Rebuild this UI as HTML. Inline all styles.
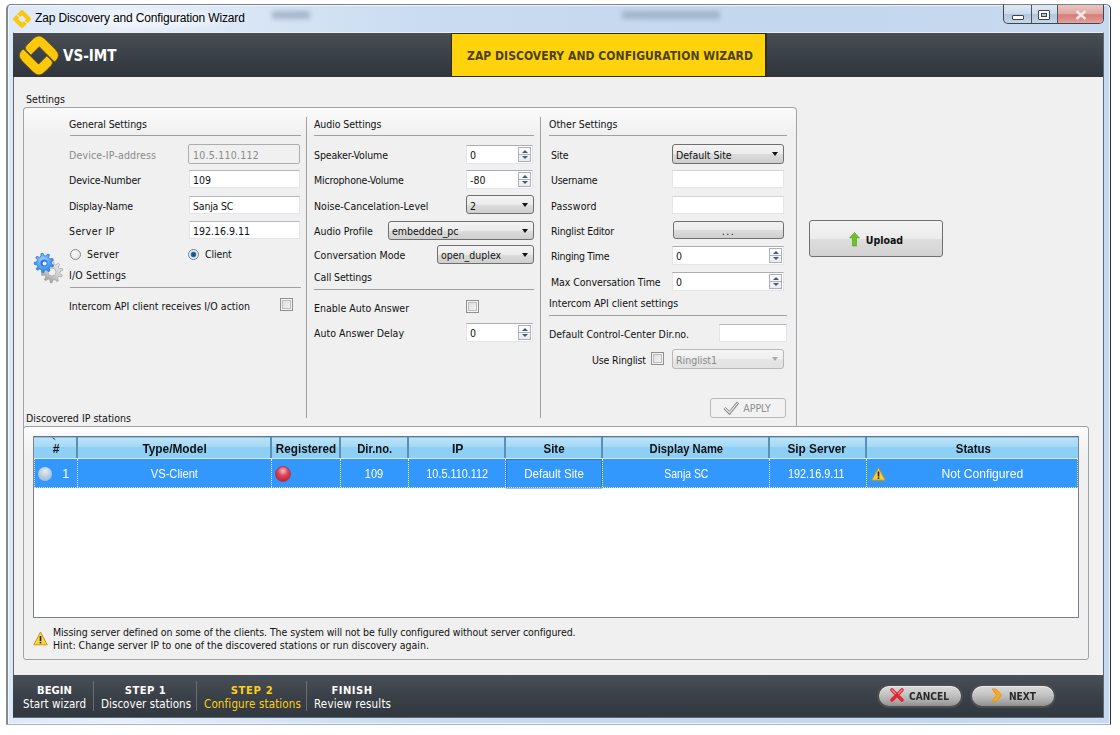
<!DOCTYPE html>
<html>
<head>
<meta charset="utf-8">
<title>Zap Discovery and Configuration Wizard</title>
<style>
html,body{margin:0;padding:0;background:#fff;}
body{width:1120px;height:735px;position:relative;overflow:hidden;font-family:"DejaVu Sans Condensed","DejaVu Sans","Liberation Sans",sans-serif;font-stretch:condensed;font-size:10.5px;color:#000;}
*{box-sizing:border-box;}
.a{position:absolute;}
.t{position:absolute;white-space:nowrap;line-height:14px;height:14px;font-size:10.5px;color:#111;}

.hl{position:absolute;height:1px;background:#a0a0a0;}
.vl{position:absolute;width:1px;background:#a0a0a0;}
.in{position:absolute;background:#fff;border:1px solid #e3e5ea;border-top-color:#b6b8be;height:18px;line-height:19px;padding-left:3px;font-size:10.5px;color:#111;white-space:nowrap;}
.cb{position:absolute;width:13px;height:13px;border:1px solid #8e8f8f;background:linear-gradient(135deg,#d9dadb,#f6f6f6);box-shadow:inset 0 0 0 1px #f4f4f4, inset 0 0 0 2px #bcbcbc;}
.combo{position:absolute;height:19px;border:1px solid #6f6f6f;border-radius:3px;background:linear-gradient(#f4f4f4 0%,#ebebeb 50%,#dcdcdc 51%,#cfcfcf 100%);line-height:19px;padding-left:3px;font-size:10.5px;color:#111;white-space:nowrap;}
.combo i{position:absolute;right:5px;top:7px;width:0;height:0;border-left:3.5px solid transparent;border-right:3.5px solid transparent;border-top:4px solid #111;}
.spin{position:absolute;height:19px;background:#fff;border:1px solid #e3e5ea;border-top-color:#abadb3;line-height:19px;padding-left:3px;font-size:10.5px;color:#111;}
.spin b{position:absolute;right:1px;top:1px;width:13px;height:15px;border:1px solid #adb0b8;background:linear-gradient(#fdfdfd,#e9ebf2);}
.spin b:before{content:"";position:absolute;left:2.5px;top:2px;border-left:3px solid transparent;border-right:3px solid transparent;border-bottom:3px solid #4d5870;}
.spin b:after{content:"";position:absolute;left:2.5px;bottom:2px;border-left:3px solid transparent;border-right:3px solid transparent;border-top:3px solid #4d5870;}
.spin b u{position:absolute;left:0;right:0;top:6px;height:1px;background:#adb0b8;}
.btn{position:absolute;border:1px solid #707070;border-radius:3px;background:linear-gradient(#f2f2f2 0%,#ebebeb 50%,#dddddd 51%,#cfcfcf 100%);text-align:center;font-size:10.5px;color:#111;}
.th{position:absolute;top:0;height:22px;line-height:25px;padding-left:2px;text-align:center;font-weight:bold;font-size:12px;color:#111;border-right:2px solid #5b8fb5;font-family:'Liberation Sans',sans-serif;font-stretch:normal;white-space:nowrap;}
.td{position:absolute;top:0;height:30px;line-height:30px;text-align:center;font-size:12px;color:#fff;border-right:1px dotted #ecead2;font-family:'Liberation Sans',sans-serif;font-stretch:normal;white-space:nowrap;}
.f{display:inline-block;}
.lf .f{transform-origin:0 50%;}
.st{position:absolute;color:#fff;font-size:11.5px;line-height:14px;white-space:nowrap;}
.st b{font-size:10px;font-family:'DejaVu Sans','Liberation Sans',sans-serif;font-stretch:normal;}
.g{color:#8a8a8a !important;}
</style>
</head>
<body>
<!-- window frame -->
<div class="a" id="frame" style="left:6px;top:4px;width:1105px;height:721px;border:1px solid #7d8487;border-left:2px solid #818b89;border-right-color:#2e343c;border-bottom-color:#a9b3bf;border-radius:5px 5px 1px 1px;background:linear-gradient(90deg,#dde9f8 0%,#e6effa 10%,#d6e4f5 24%,#c8dbf1 40%,#c3d7ee 70%,#c6d9ef 100%);box-shadow:inset 0 0 0 1px #f0f6fd;"></div>
<!-- glass smudges -->
<div class="a" style="left:60px;top:7px;width:190px;height:24px;background:radial-gradient(ellipse at center,rgba(255,255,255,.75) 0%,rgba(255,255,255,0) 70%);"></div>
<div class="a" style="left:272px;top:11px;width:38px;height:8px;background:#6f8098;opacity:.45;filter:blur(2.5px);"></div>
<div class="a" style="left:622px;top:11px;width:98px;height:8px;background:#6f8098;opacity:.4;filter:blur(2.5px);"></div>
<!-- title -->
<svg class="a" style="left:12px;top:9px" width="20" height="20" viewBox="0 0 20 20"><g transform="rotate(45 10 10)" fill="none" stroke="#fbc70a" stroke-width="4.2" stroke-linejoin="round"><path d="M5.2 10 V5.2 H14.8 V9"/><path d="M14.8 10 V14.8 H5.2 V11"/></g></svg>
<div class="a" style="left:35px;top:10px;font-family:'Liberation Sans',sans-serif;font-stretch:normal;font-size:12px;line-height:16px;color:#000;white-space:nowrap;letter-spacing:-0.15px;">Zap Discovery and Configuration Wizard</div>
<!-- caption buttons -->
<div class="a" style="left:1003px;top:4px;width:101px;height:20px;border:1px solid #3f4650;border-top:1px solid #7d8487;border-radius:0 0 5px 5px;background:linear-gradient(#dfe9f5 0%,#cddbec 48%,#b3c6de 52%,#c7d6e9 100%);overflow:hidden;">
  <div class="a" style="left:27px;top:0;width:1px;height:19px;background:#4a525c"></div>
  <div class="a" style="left:53px;top:0;width:1px;height:19px;background:#4a525c"></div>
  <div class="a" style="left:54px;top:0;width:46px;height:19px;background:linear-gradient(#e9c6c2 0%,#e0a7a1 45%,#d67d76 52%,#db8d85 75%,#e4aca5 100%)"></div>
  <div class="a" style="left:8px;top:10px;width:12px;height:5px;border:1px solid #3c4350;background:#fff;border-radius:1px"></div>
  <div class="a" style="left:34px;top:5px;width:12px;height:10px;border:1px solid #3c4350;background:#fff;border-radius:1px"></div>
  <div class="a" style="left:37px;top:8px;width:6px;height:4px;border:1px solid #3c4350;background:#b9c8dc"></div>
  <svg class="a" style="left:71px;top:5px" width="12" height="10" viewBox="0 0 12 10"><path d="M1.5 1 L10.5 9 M10.5 1 L1.5 9" stroke="#f4e6e4" stroke-width="2.6"/></svg>
</div>

<!-- content -->
<div class="a" id="content" style="left:13px;top:32px;width:1091px;height:686px;background:#f0f0f0;border:1px solid #5d6a74;border-top-color:#e6eef8;"></div>

<!-- dark header -->
<div class="a" style="left:13px;top:33px;width:1090px;height:44px;background:linear-gradient(#484e54 0%,#3b4148 50%,#30353c 100%);"></div>
<svg class="a" style="left:17px;top:34px" width="44" height="43" viewBox="-22 -21.5 44 43">
  <g transform="translate(-0.1 -0.1) rotate(45) scale(1.145)" fill="#fcc80c" stroke="#6b5410" stroke-width="0.6">
    <path d="M-10.6 4.6 Q-13.8 4.6 -13.8 1.4 V-6.8 Q-13.8 -13.8 -6.8 -13.8 H6.8 Q13.8 -13.8 13.8 -6.8 Q13.8 -5.6 12.4 -5.6 H-5.2 V4.6 Z"/>
    <path d="M10.6 -4.6 Q13.8 -4.6 13.8 -1.4 V6.8 Q13.8 13.8 6.8 13.8 H-6.8 Q-13.8 13.8 -13.8 6.8 Q-13.8 5.6 -12.4 5.6 H5.2 V-4.6 Z"/>
  </g>
</svg>
<div class="a" style="left:63px;top:47px;font-size:15px;line-height:18px;font-weight:bold;color:#fff;white-space:nowrap;">VS-IMT</div>
<div class="a" style="left:451px;top:33px;width:316px;height:44px;background:#ffd30b;border:1px solid #2e2c20;border-right-width:2px;"></div>
<div class="a" style="left:452px;top:48px;width:316px;text-align:center;font-size:12px;line-height:16px;font-weight:bold;color:#4c411c;white-space:nowrap;letter-spacing:0.05px;">ZAP DISCOVERY AND CONFIGURATION WIZARD</div>

<!-- Settings group -->
<div class="t" style="left:26px;top:92px;letter-spacing:0.04px;">Settings</div>
<div class="a" style="left:23px;top:107px;width:774px;height:330px;border:1px solid #9fa3a8;border-bottom:none;border-radius:4px 4px 0 0;background:linear-gradient(#fbfbfb 0px,#f0f0f0 26px);"></div>
<div class="vl" style="left:306px;top:117px;height:301px;"></div>
<div class="vl" style="left:540px;top:117px;height:301px;"></div>

<!-- General settings -->
<div class="t" style="left:69px;top:117px;letter-spacing:-0.07px;">General Settings</div>
<div class="hl" style="left:70px;top:135px;width:231px;"></div>
<div class="t g" style="left:69px;top:148px;letter-spacing:0.16px;">Device-IP-address</div>
<div class="in g" style="left:188px;top:144px;width:112px;height:20px;line-height:21px;background:#f0f0f0;border:1px solid #adadad;border-radius:2px;padding-left:4px;letter-spacing:0.25px;">10.5.110.112</div>
<div class="t" style="left:69px;top:173px;letter-spacing:-0.14px;">Device-Number</div>
<div class="in" style="left:189px;top:170px;width:111px;">109</div>
<div class="t" style="left:69px;top:199px;letter-spacing:-0.17px;">Display-Name</div>
<div class="in" style="left:189px;top:196px;width:111px;letter-spacing:-0.2px;">Sanja SC</div>
<div class="t" style="left:69px;top:224px;letter-spacing:0.38px;">Server IP</div>
<div class="in" style="left:189px;top:221px;width:111px;">192.16.9.11</div>
<div class="a" style="left:70px;top:249px;width:11px;height:11px;border-radius:50%;border:1px solid #85878a;background:radial-gradient(circle at 35% 35%,#fdfdfd,#dcdcdc);"></div>
<div class="t" style="left:87px;top:247px;letter-spacing:0.2px;">Server</div>
<div class="a" style="left:188px;top:249px;width:11px;height:11px;border-radius:50%;border:1px solid #6f7f95;background:radial-gradient(circle at 50% 50%,#1c456e 0,#2c6698 2.2px,#cfe3f2 3.2px,#f4f8fb 4.5px);"></div>
<div class="t" style="left:205px;top:247px;letter-spacing:-0.13px;">Client</div>
<div class="t" style="left:69px;top:268px;letter-spacing:0.17px;">I/O Settings</div>
<div class="hl" style="left:70px;top:287px;width:231px;"></div>
<div class="t" style="left:69px;top:299px;letter-spacing:0.03px;">Intercom API client receives I/O action</div>
<div class="cb" style="left:280px;top:298px;"></div>
<!-- gears icon -->
<svg class="a" style="left:26px;top:244px" width="48" height="48" viewBox="0 0 48 48">
  <defs>
    <linearGradient id="gg" x1="0.8" y1="0" x2="0.2" y2="1"><stop offset="0" stop-color="#ececec"/><stop offset="0.6" stop-color="#c9c9c9"/><stop offset="1" stop-color="#8f8f8f"/></linearGradient>
    <radialGradient id="gb" cx="0.45" cy="0.35" r="0.7"><stop offset="0" stop-color="#a6d2ff"/><stop offset="0.55" stop-color="#4f9ff2"/><stop offset="1" stop-color="#2f7fdc"/></radialGradient>
  </defs>
  <path d="M33.84 29.59 L36.34 31.13 L35.57 33.01 L32.70 32.36 L31.41 33.89 L32.52 36.61 L30.79 37.68 L28.86 35.47 L26.91 35.95 L26.22 38.80 L24.19 38.65 L23.92 35.73 L22.07 34.97 L19.83 36.86 L18.28 35.55 L19.78 33.03 L18.72 31.32 L15.80 31.54 L15.31 29.57 L18.01 28.41 L18.16 26.41 L15.66 24.87 L16.43 22.99 L19.30 23.64 L20.59 22.11 L19.48 19.39 L21.21 18.32 L23.14 20.53 L25.09 20.05 L25.78 17.20 L27.81 17.35 L28.08 20.27 L29.93 21.03 L32.17 19.14 L33.72 20.45 L32.22 22.97 L33.28 24.68 L36.20 24.46 L36.69 26.43 L33.99 27.59 Z M30 28 a4 4 0 1 0 -8 0 a4 4 0 1 0 8 0 Z" fill="url(#gg)" fill-rule="evenodd" stroke="#a4a4a4" stroke-width="0.7" stroke-linejoin="round"/>
  <path d="M25.26 19.73 L27.60 20.99 L26.97 22.94 L24.34 22.62 L23.10 24.23 L24.07 26.69 L22.34 27.79 L20.53 25.85 L18.54 26.28 L17.70 28.80 L15.67 28.52 L15.54 25.87 L13.74 24.93 L11.48 26.31 L10.10 24.80 L11.70 22.68 L10.93 20.80 L8.30 20.41 L8.22 18.36 L10.81 17.77 L11.42 15.83 L9.66 13.85 L10.92 12.23 L13.28 13.43 L15.00 12.35 L14.93 9.69 L16.93 9.26 L17.97 11.70 L19.98 11.97 L21.63 9.90 L23.44 10.85 L22.67 13.39 L24.03 14.89 L26.63 14.36 L27.41 16.25 L25.18 17.70 Z" fill="url(#gb)" stroke="#2e7ad8" stroke-width="0.8" stroke-linejoin="round"/>
  <circle cx="18" cy="19" r="3.6" fill="#2a78dc"/>
  <circle cx="18.6" cy="19.4" r="2" fill="#e8f3ff"/>
</svg>

<!-- Audio settings -->
<div class="t" style="left:314px;top:117px;letter-spacing:-0.09px;">Audio Settings</div>
<div class="hl" style="left:314px;top:135px;width:220px;"></div>
<div class="t" style="left:314px;top:148px;letter-spacing:-0.12px;">Speaker-Volume</div>
<div class="spin" style="left:466px;top:145px;width:67px;">0<b><u></u></b></div>
<div class="t" style="left:314px;top:173px;letter-spacing:-0.18px;">Microphone-Volume</div>
<div class="spin" style="left:466px;top:170px;width:67px;">-80<b><u></u></b></div>
<div class="t" style="left:314px;top:199px;letter-spacing:0.03px;">Noise-Cancelation-Level</div>
<div class="combo" style="left:466px;top:195px;width:68px;line-height:21px;">2<i></i></div>
<div class="t" style="left:314px;top:224px;letter-spacing:-0.02px;">Audio Profile</div>
<div class="combo" style="left:388px;top:221px;width:146px;">embedded_pc<i></i></div>
<div class="t" style="left:314px;top:248px;letter-spacing:0.01px;">Conversation Mode</div>
<div class="combo" style="left:437px;top:245px;width:97px;">open_duplex<i></i></div>
<div class="t" style="left:314px;top:270px;letter-spacing:-0.12px;">Call Settings</div>
<div class="hl" style="left:314px;top:289px;width:220px;"></div>
<div class="t" style="left:314px;top:301px;letter-spacing:0.01px;">Enable Auto Answer</div>
<div class="cb" style="left:466px;top:300px;"></div>
<div class="t" style="left:314px;top:326px;letter-spacing:0.01px;">Auto Answer Delay</div>
<div class="spin" style="left:466px;top:323px;width:67px;">0<b><u></u></b></div>

<!-- Other settings -->
<div class="t" style="left:549px;top:117px;letter-spacing:-0.01px;">Other Settings</div>
<div class="hl" style="left:549px;top:135px;width:238px;"></div>
<div class="t" style="left:551px;top:148px;letter-spacing:-0.21px;">Site</div>
<div class="combo" style="left:672px;top:144px;width:112px;height:20px;line-height:20px;">Default Site<i></i></div>
<div class="t" style="left:551px;top:173px;letter-spacing:-0.24px;">Username</div>
<div class="in" style="left:672px;top:170px;width:112px;border-top-color:#d2d4d8;"></div>
<div class="t" style="left:551px;top:199px;letter-spacing:0.21px;">Password</div>
<div class="in" style="left:672px;top:196px;width:112px;border-top-color:#d2d4d8;"></div>
<div class="t" style="left:551px;top:224px;letter-spacing:-0.21px;">Ringlist Editor</div>
<div class="btn" style="left:673px;top:221px;width:111px;height:18px;line-height:19px;letter-spacing:1.5px;">...</div>
<div class="t" style="left:551px;top:249px;letter-spacing:-0.31px;">Ringing Time</div>
<div class="spin" style="left:672px;top:246px;width:112px;">0<b><u></u></b></div>
<div class="t" style="left:551px;top:275px;letter-spacing:-0.07px;">Max Conversation Time</div>
<div class="spin" style="left:672px;top:272px;width:112px;">0<b><u></u></b></div>
<div class="t" style="left:549px;top:296px;letter-spacing:-0.02px;">Intercom API client settings</div>
<div class="hl" style="left:549px;top:315px;width:238px;"></div>
<div class="t" style="left:549px;top:327px;letter-spacing:-0.01px;">Default Control-Center Dir.no.</div>
<div class="in" style="left:719px;top:324px;width:68px;"></div>
<div class="t" style="left:592px;top:353px;letter-spacing:-0.15px;">Use Ringlist</div>
<div class="cb" style="left:651px;top:352px;"></div>
<div class="combo g" style="left:672px;top:349px;width:112px;height:20px;line-height:20px;border-color:#b8b8b8;background:linear-gradient(#f6f6f6,#eeeeee 50%,#e6e6e6 51%,#e2e2e2);color:#9a9a9a;">Ringlist1<i style="border-top-color:#a8a8a8"></i></div>
<div class="btn" style="left:710px;top:398px;width:76px;height:20px;line-height:19px;border-color:#b9b9b9;background:#f2f2f2;color:#8f8f8f;padding-left:18px;">APPLY</div>
<svg class="a" style="left:723px;top:401px" width="17" height="14" viewBox="0 0 17 14"><path d="M1.5 7 L6.5 12 L15 1.5" fill="none" stroke="#8e8e8e" stroke-width="3" stroke-linejoin="miter"/><path d="M1.8 7.2 L6.5 11.6 L14.6 2" fill="none" stroke="#ececec" stroke-width="1.1"/></svg>

<!-- Upload -->
<div class="btn" style="left:809px;top:220px;width:134px;height:37px;line-height:38px;font-weight:bold;padding-left:17px;border-color:#707070;background:linear-gradient(#f3f3f3 0%,#ececec 50%,#dedede 51%,#d2d2d2 100%);">Upload</div>
<svg class="a" style="left:849px;top:232px" width="11" height="15" viewBox="0 0 11 15"><path d="M5.5 0.5 L10.5 6 H7.5 V14 H3.5 V6 H0.5 Z" fill="#6cc424" stroke="#4f9a18" stroke-width="0.6"/></svg>

<!-- Discovered group -->
<div class="a" style="left:23px;top:426px;width:1066px;height:234px;border:1px solid #9fa3a8;border-radius:3px;background:linear-gradient(#fdfdfd 0px,#f0f0f0 28px);"></div>
<div class="a" style="left:24px;top:409px;width:140px;height:17px;background:#f0f0f0;"></div>
<div class="t" style="left:26px;top:411px;letter-spacing:0.02px;">Discovered IP stations</div>
<div class="a" style="left:33px;top:436px;width:1046px;height:182px;background:#fff;border:1px solid #7b828c;border-top:none;"></div>
<!-- header -->
<div class="a" id="thead" style="left:34px;top:436px;width:1044px;height:22px;background:linear-gradient(#bfe3f7 0%,#a5d9f6 45%,#8ecff5 50%,#8ecff5 100%);border-top:1px solid #557a93;box-shadow:inset 0 1px 0 #93bfd9;">
  <div class="th" style="left:0;width:44px;"><span class="f">#</span></div>
  <svg class="a" style="left:17px;top:0px" width="6" height="4" viewBox="0 0 6 4"><path d="M0.5 0.5 L5 3.5 L3 1 Z" fill="#33424e"/></svg>
  <div class="th" style="left:44px;width:194px;"><span class="f" style="transform:scaleX(0.987);">Type/Model</span></div>
  <div class="th" style="left:238px;width:69px;"><span class="f" style="transform:scaleX(0.975);">Registered</span></div>
  <div class="th" style="left:307px;width:68px;"><span class="f" style="transform:scaleX(0.937);">Dir.no.</span></div>
  <div class="th" style="left:375px;width:97px;"><span class="f" style="transform:scaleX(1.014);">IP</span></div>
  <div class="th" style="left:472px;width:97px;"><span class="f" style="transform:scaleX(0.954);">Site</span></div>
  <div class="th" style="left:569px;width:167px;"><span class="f" style="transform:scaleX(0.934);">Display Name</span></div>
  <div class="th" style="left:736px;width:97px;padding-left:0;padding-right:1px;"><span class="f" style="transform:scaleX(0.987);">Sip Server</span></div>
  <div class="th" style="left:833px;width:211px;border-right:none;"><span class="f" style="transform:scaleX(0.954);">Status</span></div>
</div>
<div class="a" id="trow" style="left:34px;top:458px;width:1044px;height:30px;background:#3398fe;outline:1px dotted #e6e6cc;outline-offset:-1px;border-top:1px solid #cfe6f7;">
  <div class="td" style="left:0;width:44px;padding-left:20px;"><span class="f">1</span></div>
  <div class="td" style="left:44px;width:194px;"><span class="f" style="transform:scaleX(0.932);">VS-Client</span></div>
  <div class="td" style="left:238px;width:69px;"></div>
  <div class="td" style="left:307px;width:68px;"><span class="f" style="transform:scaleX(0.914);">109</span></div>
  <div class="td" style="left:375px;width:97px;"><span class="f" style="transform:scaleX(0.902);">10.5.110.112</span></div>
  <div class="td" style="left:472px;width:97px;box-shadow:inset 0 0 0 1px rgba(30,70,130,.35);"><span class="f" style="transform:scaleX(0.962);">Default Site</span></div>
  <div class="td" style="left:569px;width:167px;"><span class="f" style="transform:scaleX(0.868);">Sanja SC</span></div>
  <div class="td" style="left:736px;width:97px;padding-right:3px;"><span class="f" style="transform:scaleX(0.905);">192.16.9.11</span></div>
  <div class="td" style="left:833px;width:211px;border-right:none;padding-left:20px;"><span class="f" style="transform:scaleX(1.01);">Not Configured</span></div>
  <div class="a" style="left:4px;top:8px;width:14px;height:14px;border-radius:50%;background:radial-gradient(circle at 50% 30%,#e6eef5 0,#b9cfe2 45%,#8fb0cf 100%);"></div>
  <div class="a" style="left:241px;top:7px;width:16px;height:16px;border-radius:50%;background:radial-gradient(circle at 50% 28%,#f7c0c6 0,#e0455a 40%,#b5142c 100%);border:1px solid #a83a48;"></div>
  <svg class="a" style="left:837px;top:8px" width="15" height="14" viewBox="0 0 15 14"><path d="M7.5 0.8 L14.3 13.2 H0.7 Z" fill="#f3cf3a" stroke="#b8952a" stroke-width="1" stroke-linejoin="round"/><rect x="6.7" y="4.5" width="1.6" height="5" fill="#222"/><rect x="6.7" y="10.3" width="1.6" height="1.6" fill="#222"/></svg>
</div>

<!-- warning text -->
<svg class="a" style="left:33px;top:631px" width="15" height="15" viewBox="0 0 15 15"><path d="M7.5 1 L14.2 13.8 H0.8 Z" fill="#fbd53a" stroke="#c89a1c" stroke-width="1" stroke-linejoin="round"/><rect x="6.7" y="5" width="1.6" height="5" fill="#222"/><rect x="6.7" y="10.8" width="1.6" height="1.6" fill="#222"/></svg>
<div class="t" style="left:53px;top:625px;letter-spacing:-0.08px;">Missing server defined on some of the clients. The system will not be fully configured without server configured.</div>
<div class="t" style="left:53px;top:638px;letter-spacing:-0.01px;">Hint: Change server IP to one of the discovered stations or run discovery again.</div>

<!-- footer -->
<div class="a" style="left:13px;top:675px;width:1090px;height:42px;background:linear-gradient(#484f56 0%,#3c4249 45%,#31373e 100%);"></div>
<div class="st" style="left:23px;top:683px;width:63px;text-align:center;letter-spacing:0.06px;"><b>BEGIN</b></div>
<div class="st" style="left:23px;top:697px;letter-spacing:0.07px;">Start wizard</div>
<div class="vl" style="left:93px;top:681px;height:30px;background:#6a6e74;"></div>
<div class="st" style="left:101px;top:683px;width:89px;text-align:center;letter-spacing:0.47px;"><b>STEP 1</b></div>
<div class="st" style="left:101px;top:697px;letter-spacing:0.05px;">Discover stations</div>
<div class="vl" style="left:196px;top:681px;height:30px;background:#6a6e74;"></div>
<div class="st" style="left:204px;top:683px;width:96px;text-align:center;color:#fdd017;letter-spacing:0.68px;"><b>STEP 2</b></div>
<div class="st" style="left:204px;top:697px;color:#fdd017;letter-spacing:0.15px;">Configure stations</div>
<div class="vl" style="left:306px;top:681px;height:30px;background:#6a6e74;"></div>
<div class="st" style="left:314px;top:683px;width:76px;text-align:center;letter-spacing:0.46px;"><b>FINISH</b></div>
<div class="st" style="left:314px;top:697px;letter-spacing:0.17px;">Review results</div>

<div class="a" style="left:877px;top:684px;width:86px;height:24px;border-radius:12px;border:2px solid #4b4d4f;background:linear-gradient(#dadada 0%,#c6c6c6 40%,#aaaaaa 75%,#909090 100%);box-shadow:inset 0 1px 0 #ececec;"></div>
<div class="a lf" style="left:909px;top:689px;font-size:10.5px;line-height:14px;font-weight:bold;color:#2b2b2b;white-space:nowrap;"><span class="f" style="transform:scaleX(0.962);">CANCEL</span></div>
<svg class="a" style="left:889px;top:687px" width="16" height="16" viewBox="0 0 16 16"><path d="M3 3 L13 13 M13 3 L3 13" stroke="#e0262e" stroke-width="3.6" stroke-linecap="round"/><path d="M3 3 L6.5 6.5 M13 3 L9.5 6.5" stroke="#f58a8e" stroke-width="1.4" stroke-linecap="round"/></svg>
<div class="a" style="left:970px;top:684px;width:86px;height:24px;border-radius:12px;border:2px solid #4b4d4f;background:linear-gradient(#dadada 0%,#c6c6c6 40%,#aaaaaa 75%,#909090 100%);box-shadow:inset 0 1px 0 #ececec;"></div>
<div class="a lf" style="left:1009px;top:689px;font-size:10.5px;line-height:14px;font-weight:bold;color:#2b2b2b;white-space:nowrap;"><span class="f" style="transform:scaleX(0.961);">NEXT</span></div>
<svg class="a" style="left:990px;top:687px" width="13" height="16" viewBox="0 0 13 16"><path d="M2 2 L6 2 L11.5 8 L6 14.5 L2 14.5 L6.5 8 Z" fill="#f7a81e" stroke="#e58f12" stroke-width="0.8" stroke-linejoin="round"/></svg>

</body>
</html>
